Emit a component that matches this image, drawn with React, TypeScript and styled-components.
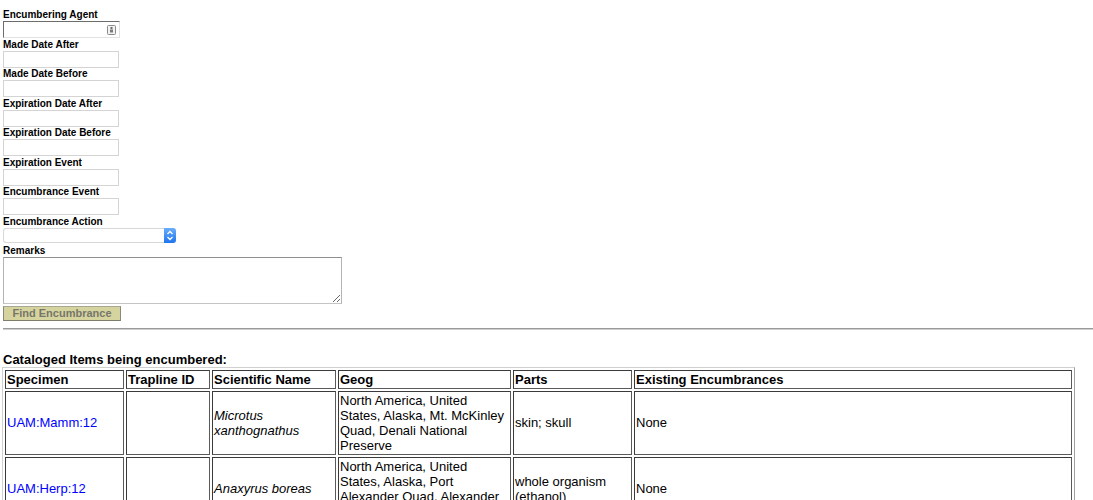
import React from "react";
import styled, { createGlobalStyle } from "styled-components";

const GlobalStyle = createGlobalStyle`
  html, body { margin: 0; padding: 0; background: #fff; }
  body { font-family: "Liberation Sans", Arial, Helvetica, sans-serif; color: #000; }
`;

const Page = styled.div`
  padding: 9px 0 40px 3px;
`;

const Form = styled.form`
  display: flex;
  flex-direction: column;
  align-items: flex-start;
`;

const Field = styled.div<{ $gap?: number }>`
  display: flex;
  flex-direction: column;
  align-items: flex-start;
  margin-bottom: ${(p) => (p.$gap ?? 0.5)}px;
`;

const Label = styled.label`
  display: block;
  font-size: 10px;
  font-weight: bold;
  line-height: 12px;
  height: 12px;
`;

const TextInput = styled.input`
  box-sizing: border-box;
  width: 116px;
  height: 17px;
  margin: 0;
  padding: 0 3px;
  border: 1px solid #d4d4d4;
  background: #fff;
  font: 11px "Liberation Sans", Arial, sans-serif;
  outline: none;
`;

const AgentBox = styled.div`
  box-sizing: border-box;
  display: flex;
  align-items: center;
  width: 117px;
  height: 17px;
  border-style: solid;
  border-width: 1px;
  border-color: #6c6c6c #e2e2e2 #e2e2e2 #6c6c6c;
  background: #fff;
  padding-right: 3px;
`;

const AgentInput = styled.input`
  flex: 1;
  min-width: 0;
  height: 100%;
  border: none;
  margin: 0;
  padding: 0 2px;
  background: transparent;
  outline: none;
  font: 11px "Liberation Sans", Arial, sans-serif;
`;

const SelectBox = styled.div`
  box-sizing: border-box;
  display: flex;
  width: 173px;
  height: 15px;
  border: 1px solid #d8d8d8;
  border-right: none;
  border-radius: 3px;
  background: #fff;
`;

const NativeSelect = styled.select`
  flex: 1;
  appearance: none;
  -webkit-appearance: none;
  border: none;
  background: transparent;
  margin: 0;
  padding: 0 3px;
  font: 11px "Liberation Sans", Arial, sans-serif;
  outline: none;
`;

const Stepper = styled.div`
  width: 12px;
  margin-top: -1px;
  margin-bottom: -1px;
  border-radius: 0 3px 3px 0;
  background: linear-gradient(#6aaefb, #1f74ee);
  display: flex;
  align-items: center;
  justify-content: center;
`;

const TextArea = styled.textarea`
  box-sizing: border-box;
  display: block;
  width: 339px;
  height: 47px;
  margin: 0;
  padding: 2px;
  border-style: solid;
  border-width: 1px;
  border-color: #8e8e8e #b4b4b4 #c4c4c4 #b4b4b4;
  font: 11px "Liberation Sans", Arial, sans-serif;
  outline: none;
`;

const Button = styled.button`
  box-sizing: border-box;
  margin-top: 2px;
  width: 118px;
  height: 15px;
  padding: 0;
  border-style: solid;
  border-width: 1px;
  border-color: #a8a791 #8a8a76 #7e7d6a #8a8a76;
  background: #d6d49e;
  color: #76766a;
  font: bold 11px "Liberation Sans", Arial, sans-serif;
  line-height: 13px;
  text-align: center;
`;

const Rule = styled.hr`
  margin: 7px 0 0 0;
  height: 0;
  border: none;
  border-top: 1px solid #9a9a9a;
  border-bottom: 1px solid #cfcfcf;
`;

const Heading = styled.div`
  margin-top: 22px;
  font-size: 13px;
  font-weight: bold;
  line-height: 15px;
`;

const Table = styled.table`
  margin-left: -1px;
  border-collapse: separate;
  border-spacing: 2px;
  border-style: solid;
  border-width: 1px;
  border-color: #d0d0d0 #a0a0a0 #a0a0a0 #d0d0d0;
  table-layout: fixed;
  font-size: 13px;
  line-height: 15px;
`;

const Th = styled.th<{ $w: number }>`
  box-sizing: border-box;
  width: ${(p) => p.$w}px;
  text-align: left;
  font-weight: bold;
  padding: 1px;
  border-style: solid;
  border-width: 1px;
  border-color: #3a3a3a #5a5a5a #5a5a5a #3a3a3a;
  vertical-align: middle;
`;

const Td = styled.td<{ $italic?: boolean }>`
  padding: 1px;
  border-style: solid;
  border-width: 1px;
  border-color: #3a3a3a #5a5a5a #5a5a5a #3a3a3a;
  vertical-align: middle;
  font-style: ${(p) => (p.$italic ? "italic" : "normal")};
`;

const Link = styled.a`
  color: #0000ff;
  text-decoration: none;
`;

const AgentIcon = () => (
  <svg width="9" height="10" viewBox="0 0 9 10">
    <rect x="0.5" y="0.5" width="8" height="9" rx="1" fill="#f2f2f2" stroke="#8a8a8a" />
    <rect x="3.5" y="2" width="2" height="2" fill="#6a6a6a" />
    <rect x="3" y="4.5" width="3" height="3" fill="#7a7a7a" />
  </svg>
);

const StepperIcon = () => (
  <svg width="8" height="11" viewBox="0 0 8 11">
    <path d="M1.5 4 L4 1.5 L6.5 4" fill="none" stroke="#fff" strokeWidth="1.3" />
    <path d="M1.5 7 L4 9.5 L6.5 7" fill="none" stroke="#fff" strokeWidth="1.3" />
  </svg>
);

const textFields = [
  "Made Date After",
  "Made Date Before",
  "Expiration Date After",
  "Expiration Date Before",
  "Expiration Event",
  "Encumbrance Event",
];

const columns: [string, number][] = [
  ["Specimen", 119],
  ["Trapline ID", 84],
  ["Scientific Name", 124],
  ["Geog", 173],
  ["Parts", 119],
  ["Existing Encumbrances", 438],
];

const rows = [
  {
    id: "UAM:Mamm:12",
    trap: "",
    sci: "Microtus xanthognathus",
    geog: "North America, United States, Alaska, Mt. McKinley Quad, Denali National Preserve",
    parts: "skin; skull",
    enc: "None",
  },
  {
    id: "UAM:Herp:12",
    trap: "",
    sci: "Anaxyrus boreas",
    geog: "North America, United States, Alaska, Port Alexander Quad, Alexander Archipelago",
    parts: "whole organism (ethanol)",
    enc: "None",
  },
];

export default function App() {
  return (
    <>
      <GlobalStyle />
      <Page>
        <Form onSubmit={(e) => e.preventDefault()}>
          <Field>
            <Label>Encumbering Agent</Label>
            <AgentBox>
              <AgentInput type="text" />
              <AgentIcon />
            </AgentBox>
          </Field>
          {textFields.map((f) => (
            <Field key={f}>
              <Label>{f}</Label>
              <TextInput type="text" />
            </Field>
          ))}
          <Field $gap={2}>
            <Label>Encumbrance Action</Label>
            <SelectBox>
              <NativeSelect defaultValue="">
                <option value=""></option>
              </NativeSelect>
              <Stepper>
                <StepperIcon />
              </Stepper>
            </SelectBox>
          </Field>
          <Field $gap={0}>
            <Label>Remarks</Label>
            <TextArea />
          </Field>
          <Button type="submit">Find Encumbrance</Button>
        </Form>
        <Rule />
        <Heading>Cataloged Items being encumbered:</Heading>
        <Table>
          <thead>
            <tr>
              {columns.map(([c, w]) => (
                <Th key={c} $w={w}>
                  {c}
                </Th>
              ))}
            </tr>
          </thead>
          <tbody>
            {rows.map((r) => (
              <tr key={r.id}>
                <Td>
                  <Link href="#">{r.id}</Link>
                </Td>
                <Td>{r.trap}</Td>
                <Td $italic>{r.sci}</Td>
                <Td>{r.geog}</Td>
                <Td>{r.parts}</Td>
                <Td>{r.enc}</Td>
              </tr>
            ))}
          </tbody>
        </Table>
      </Page>
    </>
  );
}
